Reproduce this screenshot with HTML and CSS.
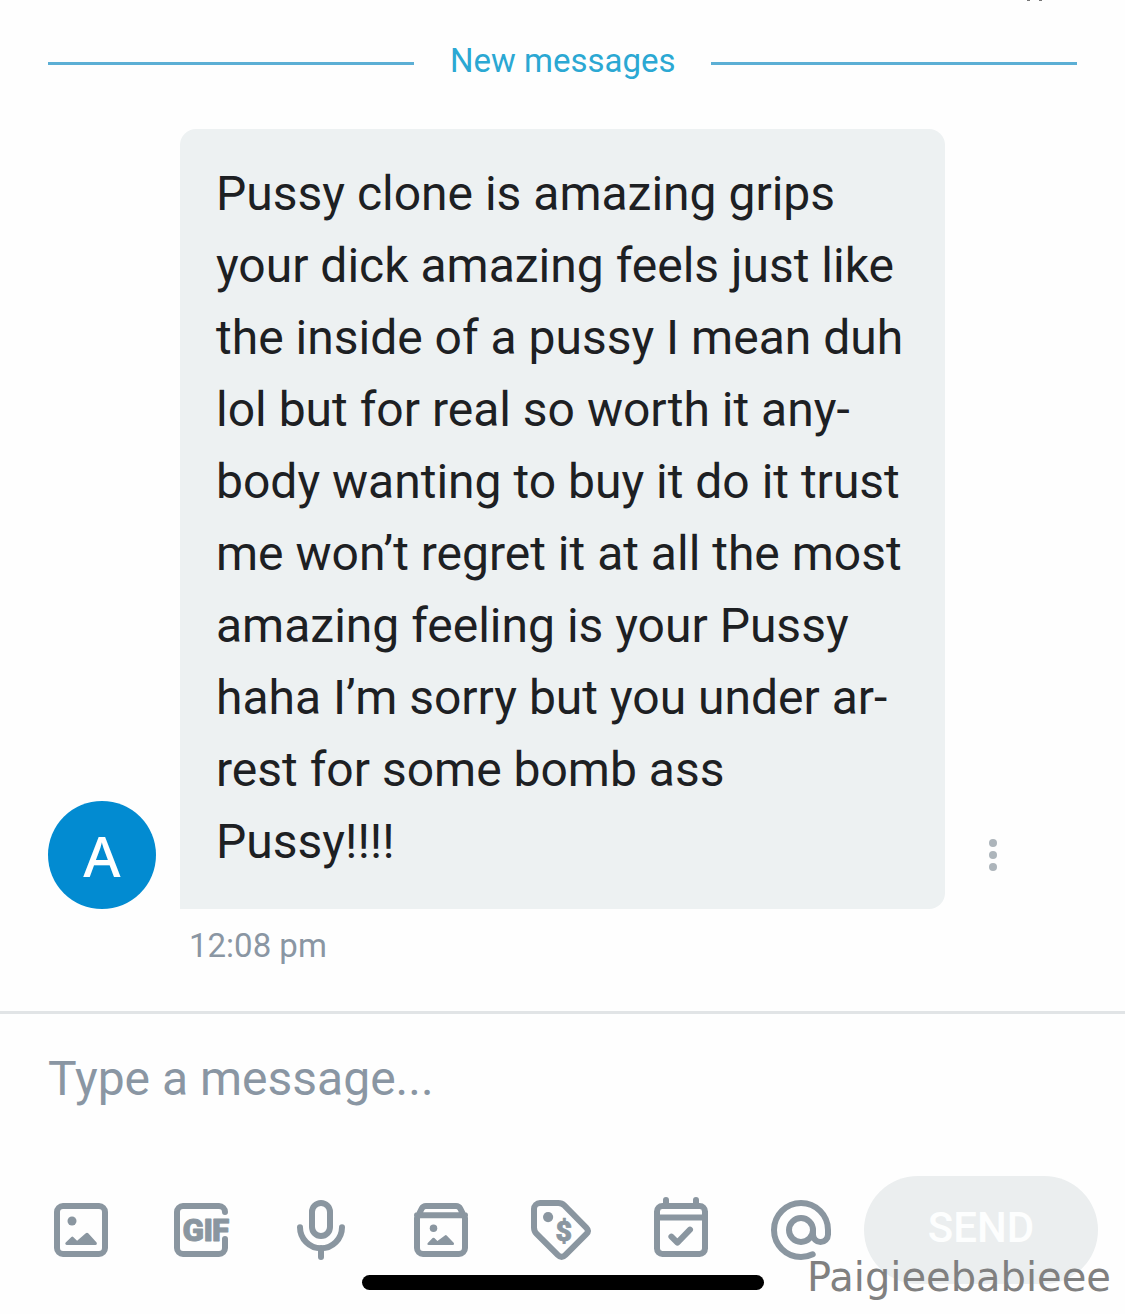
FILE: index.html
```html
<!DOCTYPE html>
<html lang="en">
<head>
<meta charset="utf-8">
<title>Messages</title>
<link rel="stylesheet" href="styles.css">
</head>
<body>
<main class="chat">
  <span class="header-edge"></span>
  <div class="divider"><span class="divider-label">New messages</span></div>
  <section class="message">
    <div class="avatar">A</div>
    <p class="bubble">Pussy clone is amazing grips<br>your dick amazing feels just like<br>the inside of a pussy I mean duh<br>lol but for real so worth it any-<br>body wanting to buy it do it trust<br>me won’t regret it at all the most<br>amazing feeling is your Pussy<br>haha I’m sorry but you under ar-<br>rest for some bomb ass<br>Pussy!!!!</p>
    <div class="more"><i></i><i></i><i></i></div>
  </section>
  <time class="time">12:08 pm</time>
  <footer class="composer">
    <div class="placeholder">Type a message...</div>
    <div class="toolbar">
      <svg class="icon" viewBox="0 0 24 24"><rect class="line" x="4" y="4" width="16" height="16" rx="2"/><circle cx="9" cy="9" r="1.5"/><path d="M7.2 17q-.7-.2-.3-.8l1.9-1.900q.3-.3.6 0l1.300 1.300 2.900-2.500q.4-.3.800 0l2.800 3.100q.300.700-.4.800z"/></svg>
      <svg class="icon" viewBox="0 0 24 24"><path class="line" d="M20 6a2 2 0 0 0-2-2H6a2 2 0 0 0-2 2v12a2 2 0 0 0 2 2h12a2 2 0 0 0 2-2v-3"/><text class="gif" x="5.800 12.800 15.700" y="15.750">GIF</text></svg>
      <svg class="icon" viewBox="0 0 24 24"><rect class="line" x="9" y="3" width="6" height="11" rx="3"/><path class="line" d="M5 11.1a7 7 0 0 0 14 0M12 18v3"/></svg>
      <svg class="icon" viewBox="0 0 24 24"><path class="line" d="M4 8l1.5-3q.5-1 1.5-1h10q1 0 1.5 1L20 8v10a2 2 0 0 1-2 2H6a2 2 0 0 1-2-2zM4 7.1h16"/><circle cx="9.5" cy="11.400" r="1.25"/><path d="M7.900 17q-.7-.1-.3-.7l1.600-1.600q.3-.3.6 0l1 1 2.500-1.900q.3-.3.6 0l2.400 2.500q.3.600-.4.700z"/></svg>
      <svg class="icon" viewBox="0 0 24 24"><path class="line" d="M3 5a2 2 0 0 1 2-2h6.1q1.2 0 2 .8l7.3 7.4q1.1 1.1 0 2.2l-6.9 6.9q-1.3 1.3-2.6 0l-7.1-7.1Q3 12.400 3 11.200z"/><circle cx="7.700" cy="7.700" r="1.7"/><text class="dollar" x="12.950" y="15.800">$</text></svg>
      <svg class="icon" viewBox="0 0 24 24"><path class="line" d="M7 4V2M17 4V2M4 7.850h16M8.800 14.200l2 2 4.200-4.300"/><rect class="line" x="4" y="4" width="16" height="16" rx="1.8"/></svg>
      <svg class="icon" viewBox="0 0 24 24"><circle class="line" cx="12" cy="12" r="4"/><path class="line" d="M16 12v1.500a2.500 2.500 0 0 0 5 0V12a9 9 0 1 0-9 9q2.100 0 3.900-.9"/></svg>
      <button class="send">SEND</button>
    </div>
  </footer>
  <div class="home-bar"></div>
  <div class="signature">Paigieebabieee</div>
</main>
</body>
</html>
```
FILE: styles.css
```css
* { box-sizing: border-box; }
body { margin: 0; background: #fefefe; font-family: Roboto, sans-serif; }
.chat { position: relative; width: 1125px; height: 1314px; overflow: hidden; display: flex; flex-direction: column; }
.header-edge { position: absolute; top: 0; left: 1027px; width: 15px; height: 1px; border: solid #777; border-width: 0 3px; }
.divider { display: flex; align-items: center; gap: 36px; height: 129px; padding: 0 48px 5px; flex: none; color: #2ba8d3; font-size: 33px; }
.divider::before, .divider::after { content: ""; flex: 1; height: 3px; margin-top: 2px; background: #5cafd5; }
.divider-label { width: 225px; padding-bottom: 3px; white-space: nowrap; }
.message { display: flex; align-items: flex-end; padding-left: 48px; flex: none; }
.avatar { width: 108px; height: 108px; border-radius: 50%; background: #028bd1; color: #fff; font: 500 57px/108px "Noto Sans", sans-serif; text-align: center; margin-right: 24px; }
.bubble { margin: 0; width: 765px; height: 780px; padding: 29px 0 31px 36px; border-radius: 16px 16px 16px 0; background: #edf1f2; color: #1d2023; font-size: 48px; line-height: 72px; white-space: nowrap; }
.more { display: flex; flex-direction: column; gap: 4px; margin: 0 0 38px 44px; }
.more i { width: 8px; height: 8px; border-radius: 50%; background: #adb5bb; }
.time { margin: 17px 0 0 189px; height: 85px; color: #8a96a3; font-size: 33px; line-height: 40px; }
.composer { height: 303px; border-top: 3px solid #e1e4e6; padding: 30px 27px 0 45px; }
.placeholder { height: 132px; padding-left: 3px; color: #8a96a3; font-size: 48px; line-height: 70px; }
.toolbar { display: flex; align-items: center; gap: 48px; height: 108px; }
.icon { width: 72px; height: 72px; flex: none; fill: #8a96a0; }
.line { fill: none; stroke: #8a96a0; stroke-width: 2; stroke-linecap: round; stroke-linejoin: round; }
.gif { font: 900 10.5px Roboto, sans-serif; stroke: #8a96a0; stroke-width: .3; stroke-linejoin: round; }
.dollar { font: 900 9.5px Roboto, sans-serif; text-anchor: middle; stroke: #8a96a0; stroke-width: .25; }
.send { width: 234px; height: 108px; margin-left: -21px; padding: 0 0 5px; border: 0; border-radius: 54px; background: #ebeeef; color: #fdfefe; font: 500 42px Roboto, sans-serif; }
.home-bar { position: absolute; left: 362px; top: 1275px; width: 402px; height: 15px; border-radius: 8px; background: #000; }
.signature { position: absolute; left: 807px; top: 1254px; color: #808080; font: 40px/47px "DejaVu Sans", sans-serif; white-space: nowrap; }
```
